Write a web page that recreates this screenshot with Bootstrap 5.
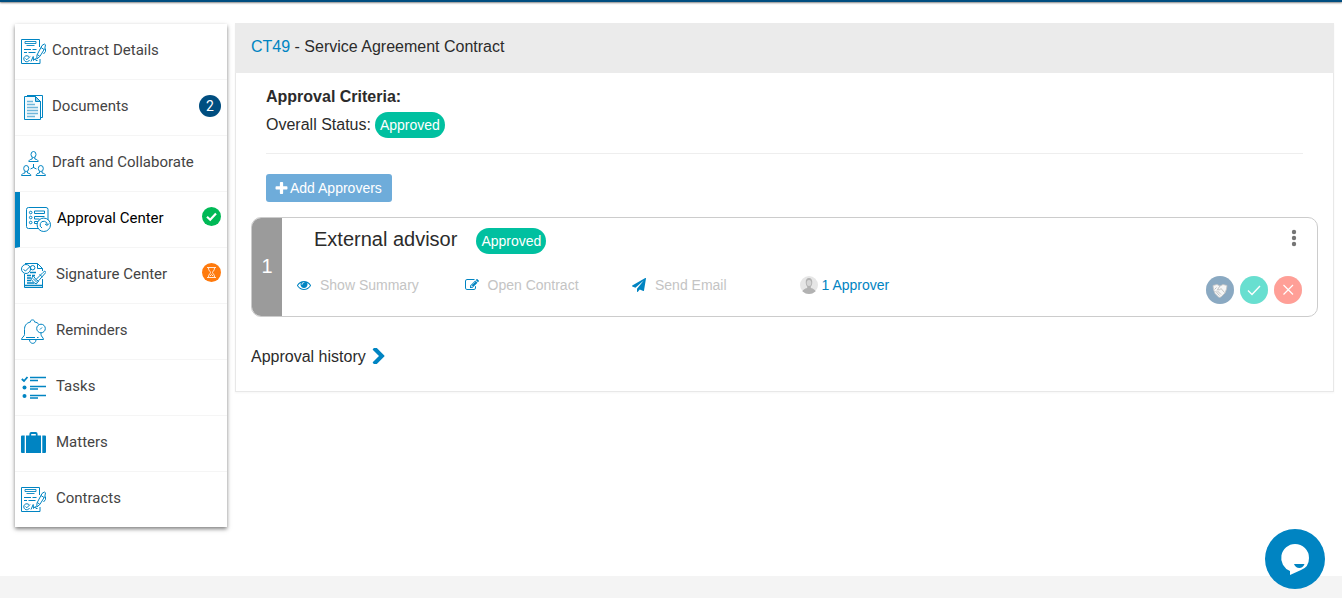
<!DOCTYPE html>
<html lang="en">
<head>
<meta charset="utf-8">
<meta name="viewport" content="width=device-width, initial-scale=1">
<title>Approval Center</title>
<link href="https://cdn.jsdelivr.net/npm/bootstrap@5.3.0/dist/css/bootstrap.min.css" rel="stylesheet">
<style>
  :root { --brand: #0084c2; --navy: #004e80; --ok: #00c0a0; }
  body { font-family: "Liberation Sans", Arial, sans-serif; font-size: 16px; line-height: 20px; color: #2b2b2b; background: #fff; }
  a { color: var(--brand); text-decoration: none; }
  svg { display: block; flex: none; }
  .topbar { height: 2px; background: var(--navy); box-shadow: 0 1px 2px rgba(0,0,0,.5); }
  .page-area { padding: 21px 8px 0 15px; gap: 8px; }
  .sidebar { width: 212px; flex: none; margin-top: 1px; background: #fff; box-shadow: 0 2px 4px rgba(0,0,0,.5); font-family: Roboto, sans-serif; font-size: 15px; }
  .side-link { height: 56px; padding: 0 6px; color: #444; border-bottom: 1px solid #f5f5f5; }
  .side-link:last-child { height: 55px; border-bottom: 0; }
  .side-link > span:first-of-type { padding-bottom: 3px; }
  .side-link.active { border-left: 5px solid var(--brand); color: #000; }
  .side-link > svg:first-child { width: 25px; height: 25px; fill: none; stroke: var(--brand); stroke-width: 1; }
  .gap-near { gap: 6px; }
  .gap-far { gap: 10px; }
  .count { width: 22px; height: 22px; margin-bottom: 4px; border-radius: 50%; background: var(--navy); color: #fff; font-size: 14px; }
  .state { margin-bottom: 7px; }
  .panel { border: 1px solid #e8e8e8; border-top: 0; box-shadow: 0 1px 2px rgba(0,0,0,.04); }
  .panel-top { height: 50px; padding: 0 16px 2px; margin: 0 -1px; background: #ebebeb; font-size: 16px; font-weight: 400; }
  .criteria { margin: 0 30px; padding: 12px 0 15px; border-bottom: 1px solid #eee; line-height: 24px; }
  .criteria h2 { font-size: 16px; font-weight: 700; line-height: 24px; margin: 0 0 3px; }
  .pill { height: 26px; padding: 0 5px; border-radius: 13px; background: var(--ok); color: #fff; font-size: 14px; }
  .add-btn { height: 28px; margin: 20px 30px 15px; padding: 0 10px 0 9px; gap: 2px; border: 0; border-radius: 3px; background: #6eacda; color: #fff; font-size: 14px; }
  .step { margin: 0 15px; border: 1px solid #ccc; border-radius: 10px; overflow: hidden; height: 100px; }
  .step-no { width: 30px; padding-bottom: 3px; background: #9b9b9b; color: #fff; font-size: 20px; }
  .step-head { height: 46px; padding: 0 20px 0 32px; gap: 19px; }
  .step-head h3 { font-size: 20px; font-weight: 400; line-height: 24px; margin: 0 0 5px; }
  .step-row { margin: 0 15px; }
  .act { padding: 0; height: 42px; border: 0; background: none; font-size: 14px; line-height: 20px; color: #c4c4c4; gap: 9px; }
  .act svg { fill: var(--brand); }
  .more { padding: 0; margin-bottom: 6px; border: 0; background: none; }
  .approver { color: var(--brand); gap: 4px; }
  .rounds { gap: 6px; height: 40px; }
  .rounds button { width: 28px; height: 28px; padding: 0; border: 0; border-radius: 50%; }
  .history { padding: 30px 15px 24px; gap: 6px; color: #2b2b2b; }
  .history svg { margin-bottom: 2px; }
  .foot { height: 22px; background: #f4f4f4; }
  .chat { width: 60px; height: 60px; right: 17px; bottom: 9px; border: 0; padding: 0; border-radius: 50%; background: var(--brand); position: fixed; }
</style>
</head>
<body class="d-flex flex-column min-vh-100">
<svg width="0" height="0" class="position-absolute" aria-hidden="true">
  <symbol id="i-contract" viewBox="0 0 25 25">
    <path d="M18.500 8V.5H.5v24h18.500V20"/>
    <path d="M4 2.500h11v2h-11zM5.500 6.500h8" stroke-width=".9"/>
    <path d="M3 10.500h7M11.500 10.500h4M3 13.500h3M7.500 13.500h7" stroke-width="1.200"/>
    <path d="M21 6.500l2.300-1.500 1.200.8-.7 3.700-5 8-3 2.500.2-4zM20 8.500l3 2M16.300 15.500l2.500 1.800M24.500 9.500v3l-2 2.500"/>
    <path d="M8.200 18a3 3 0 1 0 .3 3M4.500 19.500l1.300 1.300L9 17.500M10 22.500l2.200-5 .3 4 1.800-2 .7 2h1.500"/>
  </symbol>
</svg>

<header class="topbar"></header>

<div class="page-area d-flex align-items-start flex-grow-1">
  <nav class="sidebar d-flex flex-column" aria-label="Contract sections">
    <a href="#" class="side-link gap-near d-flex align-items-center">
      <svg aria-hidden="true"><use href="#i-contract"/></svg><span>Contract Details</span></a>
    <a href="#" class="side-link gap-near d-flex align-items-center">
      <svg viewBox="0 0 25 25" aria-hidden="true"><path d="M6 .5h15.500v22H19.500" /><path d="M3.500 1.500h11l5 5v18h-16z" fill="#f4fafd"/><path d="M14.500 1.500v5h5z" fill="#8fc6e2"/><path d="M6 6.500h6M6 9.500h8M6 12.500h11M6 15.500h11M6 18.500h11M6 21.500h8" stroke="#6fb6da" stroke-width="1.500"/></svg>
      <span>Documents</span><span class="count ms-auto d-flex align-items-center justify-content-center">2</span></a>
    <a href="#" class="side-link gap-near d-flex align-items-center">
      <svg viewBox="0 0 25 25" aria-hidden="true"><g id="person"><ellipse cx="12.500" cy="3.500" rx="2.500" ry="3"/><path d="M11.200 6.300v1.700c-2.300.5-3.200 1-3.400 2.500h9.400c-.2-1.500-1.100-2-3.400-2.500V6.300"/></g><use href="#person" x="-7.300" y="14"/><use href="#person" x="7.300" y="14"/><path d="M12.500 13v4M12.500 16.500l-3 1.500M12.500 16.500l3 1.500"/></svg>
      <span>Draft and Collaborate</span></a>
    <a href="#" class="side-link gap-near d-flex align-items-center active" aria-current="page">
      <svg viewBox="0 0 25 25" aria-hidden="true"><rect x=".5" y=".5" width="21.500" height="21" rx="2"/><circle cx="4.700" cy="5.500" r="1.300"/><circle cx="4.700" cy="10.500" r="1.300"/><circle cx="4.700" cy="15.500" r="1.300"/><path d="M8.500 4h10v2.500h-10zM18.500 9.500h-10v2.500h5M12 14.500H8.500v2H11"/><circle cx="17.800" cy="17.800" r="6.700" fill="#fff"/><path d="M16 21a3.600 3.600 0 1 1 5.300-3M19 17l2.200 1.500L23 16.500"/></svg>
      <span>Approval Center</span>
      <svg class="state ms-auto" width="19" height="19" viewBox="0 0 19 19" role="img" aria-label="Approved"><circle cx="9.500" cy="9.500" r="9.500" fill="#00b956"/><path d="M5 9.800l3.200 3L14 6.500" fill="none" stroke="#fff" stroke-width="2.200"/></svg></a>
    <a href="#" class="side-link gap-far d-flex align-items-center">
      <svg viewBox="0 0 25 25" aria-hidden="true"><path d="M4 .5h12.500l5 5V8M21.500 16v8.500M3.500 11v13.500H22"/><path d="M3.500 22.500h18" stroke-width="1.500"/><path d="M16.500.5v5h5"/><circle cx="5" cy="6" r="4.500" fill="#fff"/><path d="M2.500 6.500l2 1.500 5-5"/><circle cx="11.700" cy="4.700" r="2.200"/><path d="M9 9.500h6M6 12.500h4M11 12.500h3M6 15h4M6 17.500h4M6 20h7" stroke-width="1.300"/><path d="M12 12.500l3 4 7-7 1.800-1.500 1 1.500-7 8-2.500 3.500-2.500-1.500-2.500-3z" fill="#fff"/><path d="M12 15.500l4 4M15 16.500l3 2M18.500 11.500l3 2.500"/></svg>
      <span>Signature Center</span>
      <svg class="state ms-auto" width="19" height="19" viewBox="0 0 19 19" role="img" aria-label="Pending"><circle cx="9.500" cy="9.500" r="9.500" fill="#ff7a0d"/><path d="M5 4.500h9M5 14.500h9M6.500 5c0 3 2 3.300 2 4.500s-2 1.500-2 4.500M12.500 5c0 3-2 3.300-2 4.500s2 1.500 2 4.500M8 13l1.500-1.500L11 13" fill="none" stroke="#ffe9d8"/></svg></a>
    <a href="#" class="side-link gap-far d-flex align-items-center">
      <svg viewBox="0 0 25 25" aria-hidden="true"><path d="M9.500 3C9 .2 14 .2 13.500 3c2 .3 3.500 1 4.500 2.500M9.500 3C5 4 3.500 7 3.500 10.500v5c0 2-3 3-3 5h22c0-2-2.500-3-2.500-5V14"/><path d="M8.500 21c.5 4.500 6 4.500 6.500 0M5 18.500h9M16 18.500h1.500"/><circle cx="20" cy="9.500" r="4.300"/><path d="M19 10.500l2-2"/></svg>
      <span>Reminders</span></a>
    <a href="#" class="side-link gap-far d-flex align-items-center">
      <svg viewBox="0 0 25 25" aria-hidden="true"><path d="M.8 4l2.200 2 3.500-4" stroke-width="1.800"/><path d="M9 2.500h16M9 11.500h16M9 20.500h16" stroke-width="1.500"/><path d="M9 5.500h8M9 14h8M9 23h8" stroke-width="1.300"/><g fill="#0084c2" stroke="none"><circle cx="3.500" cy="12.500" r="2"/><circle cx="3.500" cy="21" r="2"/></g></svg>
      <span>Tasks</span></a>
    <a href="#" class="side-link gap-far d-flex align-items-center">
      <svg viewBox="0 0 25 25" aria-hidden="true"><g fill="#0084c2" stroke="none"><path d="M0 5.500q0-1 1-1h2.700v17.500H1q-1 0-1-1zM25 5.500q0-1-1-1h-2.700v17.500H24q1 0 1-1zM5 4.500h15v17.500H5z"/></g><path d="M9.300 5.500V3q0-1 1-1h4.400q1 0 1 1v2.500" stroke-width="1.800"/></svg>
      <span>Matters</span></a>
    <a href="#" class="side-link gap-far d-flex align-items-center">
      <svg aria-hidden="true"><use href="#i-contract"/></svg><span>Contracts</span></a>
  </nav>

  <main class="panel flex-grow-1">
    <h1 class="panel-top d-flex align-items-center"><span><a href="#">CT49</a> - Service Agreement Contract</span></h1>

    <section class="criteria">
      <h2>Approval Criteria:</h2>
      <div class="d-flex align-items-center gap-1"><span>Overall Status:</span><span class="pill d-flex align-items-center">Approved</span></div>
    </section>

    <button type="button" class="add-btn d-flex align-items-center"><svg width="13" height="13" viewBox="128 128 1536 1536" fill="#fff" aria-hidden="true"><path d="M1600 736v192q0 40-28 68t-68 28h-416v416q0 40-28 68t-68 28h-192q-40 0-68-28t-28-68v-416h-416q-40 0-68-28t-28-68v-192q0-40 28-68t68-28h416v-416q0-40 28-68t68-28h192q40 0 68 28t28 68v416h416q40 0 68 28t28 68z"/></svg>Add Approvers</button>

    <section class="step d-flex">
      <div class="step-no d-flex align-items-center justify-content-center">1</div>
      <div class="flex-grow-1">
        <div class="step-head d-flex align-items-center">
          <h3>External advisor</h3>
          <span class="pill d-flex align-items-center">Approved</span>
          <button type="button" class="more ms-auto" aria-label="More options"><svg width="6" height="18" viewBox="0 0 6 18" fill="#757575"><circle cx="3" cy="3" r="2.200"/><circle cx="3" cy="9" r="2.200"/><circle cx="3" cy="15" r="2.200"/></svg></button>
        </div>
        <div class="step-row row g-0">
          <div class="col-2"><button type="button" class="act d-flex align-items-center"><svg width="14" height="14" viewBox="0 0 1792 1792" aria-hidden="true"><path d="M1664 960q-152-236-381-353 61 104 61 225 0 185-131.500 316.500t-316.500 131.500-316.500-131.500-131.500-316.500q0-121 61-225-229 117-381 353 133 205 333.500 326.500t434.500 121.500 434.500-121.500 333.500-326.500zm-720-384q0-20-14-34t-34-14q-125 0-214.500 89.500t-89.500 214.500q0 20 14 34t34 14 34-14 14-34q0-86 61-147t147-61q20 0 34-14t14-34zm848 384q0 34-20 69-140 230-376.500 368.500t-499.500 138.500-499.500-139-376.500-368q-20-35-20-69t20-69q140-229 376.500-368t499.500-139 499.500 139 376.500 368q20 35 20 69z"/></svg>Show Summary</button></div>
          <div class="col-2"><button type="button" class="act d-flex align-items-center"><svg width="14" height="14" viewBox="0 0 1792 1792" aria-hidden="true"><path d="M888 1184l116-116-152-152-116 116v56h96v96h56zm440-720q-16-16-33 1l-350 350q-17 17-1 33t33-1l350-350q17-17 1-33zm80 594v190q0 119-84.500 203.500t-203.500 84.500h-832q-119 0-203.500-84.500t-84.500-203.500v-832q0-119 84.500-203.500t203.500-84.500h832q63 0 117 25 15 7 18 23 3 17-9 29l-49 49q-14 14-32 8-23-6-45-6h-832q-66 0-113 47t-47 113v832q0 66 47 113t113 47h832q66 0 113-47t47-113v-126q0-13 9-22l64-64q15-15 35-7t20 29zm-96-738l288 288-672 672h-288v-288zm444 132l-92 92-288-288 92-92q28-28 68-28t68 28l152 152q28 28 28 68t-28 68z"/></svg>Open Contract</button></div>
          <div class="col-2"><button type="button" class="act d-flex align-items-center"><svg width="14" height="14" viewBox="0 0 1792 1792" aria-hidden="true"><path d="M1764 11q33 24 27 64l-256 1536q-5 29-32 45-14 8-31 8-11 0-24-5l-453-185-242 295q-18 23-49 23-13 0-22-4-19-7-30.500-23.500t-11.500-36.500v-349l864-1059-1069 925-395-162q-37-14-40-55-2-40 32-59l1664-960q15-9 32-9 20 0 36 11z"/></svg>Send Email</button></div>
          <div class="col-2"><a href="#" class="act approver d-flex align-items-center"><svg width="18" height="18" viewBox="0 0 18 18" aria-hidden="true"><circle cx="9" cy="9" r="9" fill="#e6e6e6"/><path d="M2.500 15.500Q3 13 7.200 12v-1.500C5 8 5 2 9 2s4 6 1.800 8.500V12q4.200 1 4.700 3.500Q9 20.500 2.500 15.500z" fill="#b2b2b2"/><ellipse cx="9" cy="7" rx="2.300" ry="3" fill="#d6d6d6"/></svg>1 Approver</a></div>
          <div class="rounds col-4 d-flex align-items-end justify-content-end">
            <button type="button" aria-label="Delegate"><svg width="28" height="28" viewBox="0 0 28 28"><circle cx="14" cy="14" r="14" fill="#8aa9c2"/><path d="M7 9.500l4-1 3 1.500 3-1.500 4 1-.5 3.500-1.500 4-4 4-2 .500-4-4-1.500-4z" fill="#f6f6f6" stroke="#c4c4c4" stroke-width=".8"/><path d="M14 10l-2.500 3.500 2 .5 1.500-1.500 3.500 4M9.500 15l4 4.500M11 14.500l4 4M8.500 13.500l2-2" fill="none" stroke="#aaa" stroke-width=".7"/></svg></button>
            <button type="button" aria-label="Approve"><svg width="28" height="28" viewBox="0 0 28 28"><circle cx="14" cy="14" r="14" fill="#68dfd0"/><path d="M8 14.500l4 4 8-8.500" fill="none" stroke="#fff" stroke-width="1.400"/></svg></button>
            <button type="button" aria-label="Reject"><svg width="28" height="28" viewBox="0 0 28 28"><circle cx="14" cy="14" r="14" fill="#ff9f97"/><path d="M9.500 9l9.500 9.500M19 9l-9.500 9.500" fill="none" stroke="#fff" stroke-width="1.200"/></svg></button>
          </div>
        </div>
      </div>
    </section>

    <a href="#" class="history d-flex align-items-center">Approval history<svg width="14" height="16" viewBox="320 128 1152 1408" fill="#0084c2" aria-hidden="true"><path d="M1363 877l-742 742q-19 19-45 19t-45-19l-166-166q-19-19-19-45t19-45l531-531-531-531q-19-19-19-45t19-45l166-166q19-19 45-19t45 19l742 742q19 19 19 45t-19 45z"/></svg></a>
  </main>
</div>

<footer class="foot"></footer>

<button type="button" class="chat" aria-label="Open chat"><svg width="60" height="60" viewBox="0 0 60 60"><path d="M30 15a14 14 0 0 1 14 14q0 9-8 12l-11 5v-4A14 14 0 0 1 30 15z" fill="#fff"/><path d="M29 35h10.500q-1.500 4-5.200 4T29 35z" fill="#0084c2"/></svg></button>
<script src="https://cdn.jsdelivr.net/npm/bootstrap@5.3.0/dist/js/bootstrap.bundle.min.js"></script>
</body>
</html>
